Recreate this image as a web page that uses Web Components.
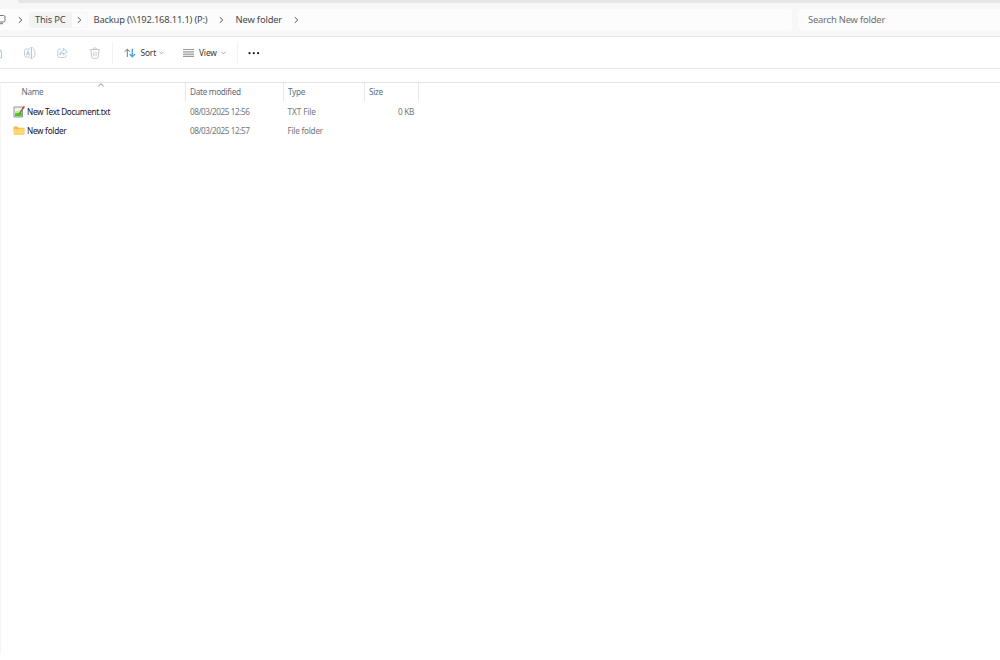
<!DOCTYPE html>
<html lang="en">
<head>
<meta charset="utf-8">
<title>New folder</title>
<style>
  html, body {
    margin: 0;
    height: 100%;
    overflow: hidden;
    background: #fff;
  }
</style>
</head>
<body>
<file-explorer></file-explorer>

<script>
const chevron = `<svg width="5" height="8" viewBox="0 0 5 8" fill="none" stroke="#555" stroke-width="1"><path d="M.8 1.2 3.8 4 .8 6.8"/></svg>`;

// Single line of text with its own tracking
class TextLabel extends HTMLElement {
  constructor() {
    super();
    this.attachShadow({ mode: 'open' });
  }

  connectedCallback() {
    this.shadowRoot.innerHTML = `
    <style>
    :host{
      display:block;
      white-space:nowrap;
      letter-spacing:${this.getAttribute('track') || 0}px;
    }
    </style>
    <slot></slot>`;
  }
}
customElements.define('text-label', TextLabel);

class AddressBar extends HTMLElement {
  constructor() {
    super();
    this.attachShadow({ mode: 'open' });
  }

  connectedCallback() {
    this.shadowRoot.innerHTML = `
    <style>
    :host{
      display:flex;
      gap:6px;
      height:33px;
      padding-top:6px;
      box-sizing:border-box;
      background:#f7f7f7;
      font-size:9.4px;
      line-height:21px;
      color:#484848;
    }
    .path{
      display:flex;
      align-items:center;
      width:792px;
      height:21px;
      background:#fcfcfc;
      border-radius:0 3px 3px 0;
    }
    .search{
      flex:1;
      height:21px;
      padding-left:10px;
      background:#fcfcfc;
      border-radius:3px 0 0 3px;
      color:#6e6e6e;
    }
    svg{ display:block; flex:none; }
    .pc{ width:6px; margin-right:12px; }
    .crumb{
      display:flex;
      align-items:center;
      height:16px;
      margin-left:6px;
    }
    .crumb text-label{
      width:37px;
      height:16px;
      line-height:16px;
      padding-left:6px;
      background:#f3f3f3;
      border-radius:3px 0 0 3px;
    }
    .crumb span{
      display:flex;
      align-items:center;
      width:16px;
      height:16px;
      justify-content:center;
      box-sizing:border-box;
      border:1px solid #f6f6f6;
      border-left:0;
      border-radius:0 3px 3px 0;
    }
    .drive{ width:125.5px; margin-left:5.5px; }
    .folder{ width:58.5px; margin-left:11.5px; }
    </style>
    <div class="path">
      <svg class="pc" width="6" height="11" viewBox="0 0 6 11" fill="none" stroke="#777"><path d="M0 1.5H3.5Q5 1.5 5 3V6.5Q5 8 3.5 8H0M0 9.7H3"/></svg>
      ${chevron}
      <div class="crumb">
        <text-label track="-0.2">This PC</text-label>
        <span>${chevron}</span>
      </div>
      <text-label class="drive" track="-0.2">Backup (\\\\192.168.11.1) (P:)</text-label>
      ${chevron}
      <text-label class="folder" track="-0.17">New folder</text-label>
      ${chevron}
    </div>
    <div class="search"><text-label track="-0.19">Search New folder</text-label></div>`;
  }
}
customElements.define('address-bar', AddressBar);

class CommandBar extends HTMLElement {
  constructor() {
    super();
    this.attachShadow({ mode: 'open' });
  }

  connectedCallback() {
    const down = `<svg class="down" width="5" height="4" viewBox="0 0 5 4" fill="none" stroke="#999" stroke-width=".9"><path d="M.5.8 2.5 2.8 4.5.8"/></svg>`;
    this.shadowRoot.innerHTML = `
    <style>
    :host{
      display:flex;
      align-items:center;
      height:33px;
      box-sizing:border-box;
      border-top:1px solid #e7e7e7;
      border-bottom:1px solid #e7e7e7;
      background:#fff;
      font-size:8.4px;
      line-height:16px;
      color:#383838;
    }
    svg{ display:block; flex:none; }
    text-label{ padding-top:1px; }
    .rename{ margin-left:20px; }
    .share{ margin-left:20px; }
    .trash{ margin-left:20px; }
    .rule{ width:1px; height:22px; background:#f2f2f2; }
    .rule.a{ margin-left:11px; }
    .rule.b{ margin-left:11px; }
    .arrows{ margin:0 4.5px 0 11px; }
    .sort{ width:15.5px; }
    .down{ margin-left:3px; }
    .lines{ margin:0 5px 0 19px; }
    .view{ width:18.5px; }
    .more{ margin-left:10.5px; }
    </style>
    <svg width="3" height="12" viewBox="0 0 3 12" fill="none"><path d="M0 2 1.2 4" stroke="#ccc"/><path d="M0 4.5H1.5V10.8H0" stroke="#9fcdf0"/></svg>
    <svg class="rename" width="13" height="12" viewBox="0 0 13 12" fill="none">
      <path d="M7 2H3Q1.5 2 1.5 3.5V8.5Q1.5 10 3 10H7M10 2Q11.8 2 11.8 3.5V8.5Q11.8 10 10 10" stroke="#ccc"/>
      <path d="M3.3 8.5 5 3.8 6.7 8.5M3.9 7H6.1M8.5.8V11.2M7.3.7H9.7M7.3 11.3H9.7" stroke="#9fcdf0"/>
    </svg>
    <svg class="share" width="13" height="12" viewBox="0 0 13 12" fill="none">
      <path d="M5 2H3.5Q1.8 2 1.8 3.7V8.8Q1.8 10.5 3.5 10.5H8.5Q10.2 10.5 10.2 8.8V8" stroke="#ccc"/>
      <path d="M7.5 1.4 11.3 4.7 7.5 7.8V6Q5 5.8 3.8 8 4.1 3.8 7.5 3.3Z" stroke="#9fcdf0"/>
    </svg>
    <svg class="trash" width="12" height="12" viewBox="0 0 12 12" fill="none" stroke="#c8c8c8">
      <path d="M1 2.5H11M4.3 2.3Q4.3.8 6 .8T7.7 2.3M2 2.7 2.8 10Q3 11.3 4.2 11.3H7.8Q9 11.3 9.2 10L10 2.7M4.9 5V9M7.1 5V9"/>
    </svg>
    <div class="rule a"></div>
    <svg class="arrows" width="12" height="10" viewBox="0 0 12 10" fill="none">
      <path d="M3.3 9V1.2M.5 3.9 3.3 1.2 6 3.9" stroke="#777"/>
      <path d="M8.3.8V8.6M5.7 6 8.3 8.7 11 6" stroke="#4aa3dc" stroke-width="1.3"/>
    </svg>
    <text-label class="sort" track="-0.15">Sort</text-label>${down}
    <svg class="lines" width="11" height="8" viewBox="0 0 11 8" stroke="#999"><path d="M0 .5H11M0 2.8H11M0 5.1H11M0 7.4H11" stroke-width="1.2"/></svg>
    <text-label class="view" track="-0.15">View</text-label>${down}
    <div class="rule b"></div>
    <svg class="more" width="12" height="4" viewBox="0 0 12 4" fill="#222"><circle cx="1.5" cy="2.2" r="1.1"/><circle cx="5.8" cy="2.2" r="1.1"/><circle cx="10.1" cy="2.2" r="1.1"/></svg>`;
  }
}
customElements.define('command-bar', CommandBar);

// Column titles: Name, Date modified, Type, Size
class ColumnHeader extends HTMLElement {
  constructor() {
    super();
    this.attachShadow({ mode: 'open' });
  }

  connectedCallback() {
    this.shadowRoot.innerHTML = `
    <style>
    :host{
      display:grid;
      grid-template-columns:185px 98px 81px 54px;
      height:18px;
      line-height:17px;
      color:#5a6d80;
    }
    .cell{
      display:flex;
      box-sizing:border-box;
      padding-left:4px;
      border-right:1px solid #e8e8e8;
    }
    .name{ padding-left:20.5px; }
    .up{ display:block; margin-left:55px; }
    </style>
    <div class="cell name"><text-label track="-0.3">Name</text-label>
      <svg class="up" width="6" height="4" viewBox="0 0 6 4" fill="none" stroke="#888"><path d="M.4 3.2 3 .7 5.6 3.2"/></svg>
    </div>
    <div class="cell"><text-label track="-0.3">Date modified</text-label></div>
    <div class="cell"><text-label track="-0.3">Type</text-label></div>
    <div class="cell"><text-label track="-0.3">Size</text-label></div>`;
  }
}
customElements.define('column-header', ColumnHeader);

class FileRow extends HTMLElement {
  constructor() {
    super();
    this.attachShadow({ mode: 'open' });
  }

  connectedCallback() {
    this.shadowRoot.innerHTML = `
    <style>
    :host{
      display:grid;
      grid-template-columns:189px 97.5px 81px 45.5px;
      height:19px;
      line-height:19px;
      color:#757575;
    }
    .name{
      display:flex;
      align-items:center;
      gap:2px;
      padding-left:12px;
      color:#20102a;
    }
    .size{ justify-self:end; }
    ::slotted(svg){ display:block; flex:none; }
    </style>
    <div class="name"><slot name="icon"></slot><slot name="name"></slot></div>
    <slot name="date"></slot>
    <slot name="type"></slot>
    <div class="size"><slot name="size"></slot></div>`;
  }
}
customElements.define('file-row', FileRow);

class FileExplorer extends HTMLElement {
  constructor() {
    super();
    this.attachShadow({ mode: 'open' });
  }

  connectedCallback() {
    this.shadowRoot.innerHTML = `
    <style>
    :host{
      display:flex;
      flex-direction:column;
      height:660px;
      font-family:"Noto Sans", "Open Sans", sans-serif;
      font-size:8.2px;
    }
    .tabs{
      height:3px;
      padding-left:18px;
      background:#f7f7f7;
    }
    .tabs div{
      height:3px;
      background:#e6e6e6;
      border-radius:0 0 0 2px;
    }
    .list{
      height:572px;
      margin-top:13px;
      box-sizing:border-box;
      border-top:1px solid #e4e4e4;
      border-left:1px solid #f5f5f5;
    }
    .rows{ padding-top:1.4px; }
    </style>
    <div class="tabs"><div></div></div>
    <address-bar></address-bar>
    <command-bar></command-bar>
    <div class="list">
      <column-header></column-header>
      <div class="rows">
        <file-row>
          <svg slot="icon" width="12" height="12" viewBox="0 0 12 12">
            <path d="M1 1H9.5V11H1Z" fill="#f1f4f2" stroke="#929597"/>
            <path d="M2 5.5 8.8 4V8.5H2Z" fill="#c5e88a"/>
            <path d="M2 7.5 8.8 6.5V10.3H2Z" fill="#4fc02f"/>
            <path d="M10.3 1.5 6.6 7.5" stroke="#8a6a3a" stroke-width="1.4"/>
            <path d="M11.3.3 9.8 2.7" stroke="#d84b3c" stroke-width="1.7"/>
          </svg>
          <text-label slot="name" track="-0.32">New Text Document.txt</text-label>
          <text-label slot="date" track="-0.45">08/03/2025 12:56</text-label>
          <text-label slot="type" track="-0.1">TXT File</text-label>
          <text-label slot="size" track="-0.3">0 KB</text-label>
        </file-row>
        <file-row>
          <svg slot="icon" width="12" height="12" viewBox="0 0 12 12">
            <path d="M.5 2.5Q.5 1.5 1.5 1.5H4.3L5.6 2.8H10.5Q11.5 2.8 11.5 3.8V6H.5Z" fill="#f2b843"/>
            <path d="M.5 4H4.8L5.8 3.4H11.5V9Q11.5 10 10.5 10H1.5Q.5 10 .5 9Z" fill="#ffd676"/>
          </svg>
          <text-label slot="name" track="-0.28">New folder</text-label>
          <text-label slot="date" track="-0.45">08/03/2025 12:57</text-label>
          <text-label slot="type" track="-0.25">File folder</text-label>
        </file-row>
      </div>
    </div>`;
  }
}
customElements.define('file-explorer', FileExplorer);
</script>
</body>
</html>
